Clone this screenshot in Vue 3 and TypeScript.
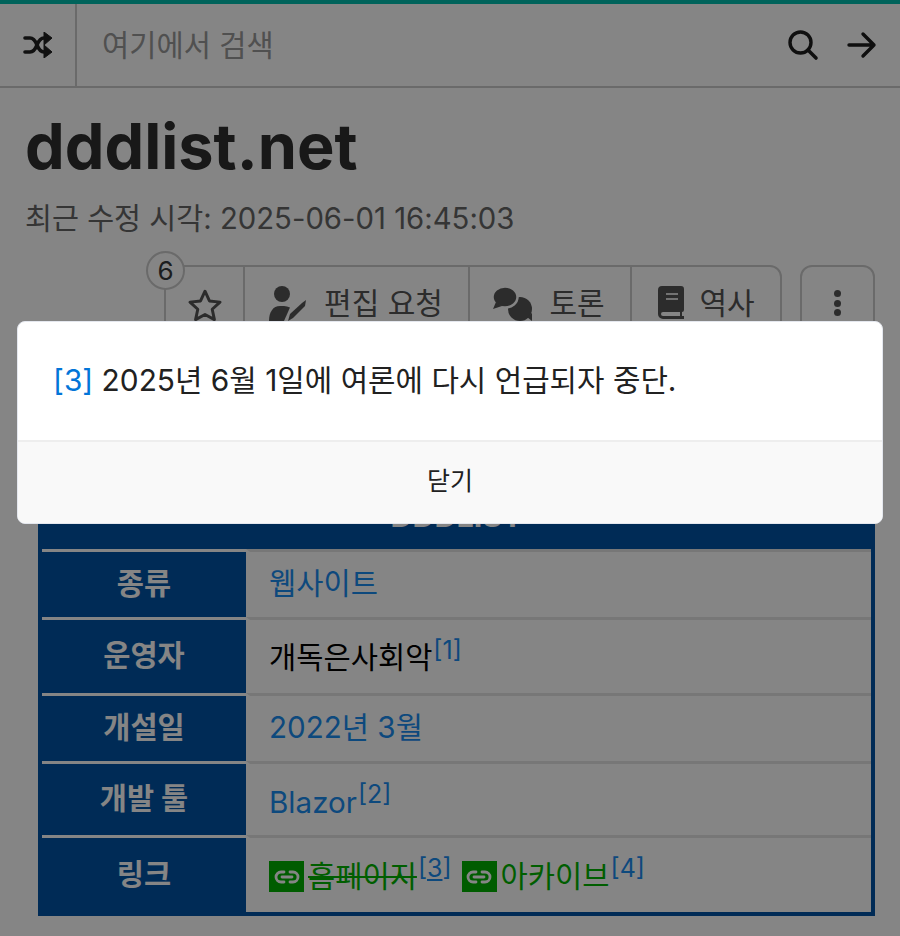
<script setup lang="ts">
interface Row {
  label: string
  height: number
}

const rows: Row[] = [
  { label: '종류', height: 68 },
  { label: '운영자', height: 76 },
  { label: '개설일', height: 68 },
  { label: '개발 툴', height: 74 },
  { label: '링크', height: 77 },
]
</script>

<template>
  <div class="page">
    <div class="accent" />
    <header class="nav">
      <button class="nav-random" aria-label="random">
        <svg width="30" height="26" viewBox="0 0 30 26">
          <path d="M2 6h5c3 0 5 2 7 7s4 7 7 7h3M2 20h5c3 0 5-2 7-7s4-7 7-7h3" fill="none" stroke="#222" stroke-width="3.6" stroke-linecap="round" />
          <path d="M21 0l8 6-8 7zM21 13l8 7-8 6z" fill="#222" stroke="#222" stroke-linejoin="round" />
        </svg>
      </button>
      <span class="nav-search">여기에서 검색</span>
      <svg class="nav-icon" width="32" height="32" viewBox="0 0 32 32">
        <circle cx="13.5" cy="13.5" r="10.5" fill="none" stroke="#1d1d1d" stroke-width="3.4" />
        <path d="M21 21l8 8" stroke="#1d1d1d" stroke-width="3.6" stroke-linecap="round" />
      </svg>
      <svg class="nav-icon nav-arrow" width="30" height="28" viewBox="0 0 30 28">
        <path d="M2 14h25M16 3l11 11-11 11" fill="none" stroke="#1d1d1d" stroke-width="3.4" stroke-linecap="round" stroke-linejoin="round" />
      </svg>
    </header>

    <main class="content">
      <h1 class="title">dddlist.net</h1>
      <p class="modified">최근 수정 시각: 2025-06-01 16:45:03</p>

      <div class="actions">
        <div class="tabs">
          <span class="star-count">6</span>
          <div class="tab tab-star">
            <svg width="36" height="34" viewBox="0 0 34 32">
              <path d="M17 3l4.2 9.2 10 1.1-7.4 6.7 2.1 9.8L17 25l-8.9 4.8 2.1-9.8-7.4-6.7 10-1.1z" fill="none" stroke="#555" stroke-width="2.8" stroke-linejoin="round" />
            </svg>
          </div>
          <div class="tab tab-edit">
            <svg width="40" height="36" viewBox="0 0 40 36">
              <circle cx="14" cy="9" r="8" fill="#555" />
              <path d="M1 36c0-9 4-15 11-15h4c2 0 4 .5 6 1.5L16 36z" fill="#555" />
              <path d="M20 36l2-7 12-11 4-3-1 6-12 12z" fill="#555" />
            </svg>
            <span>편집 요청</span>
          </div>
          <div class="tab tab-talk">
            <svg width="40" height="36" viewBox="0 0 40 36">
              <circle cx="27" cy="24" r="12" fill="#555" />
              <path d="M39 36l-5-4 5-4z" fill="#555" />
              <ellipse cx="12" cy="12" rx="12.5" ry="10.5" fill="#555" stroke="#fff" stroke-width="2.5" />
              <path d="M0 24l3-7 6 4z" fill="#555" />
            </svg>
            <span>토론</span>
          </div>
          <div class="tab tab-history">
            <svg width="28" height="34" viewBox="0 0 28 34">
              <path d="M5 1h19a3 3 0 0 1 3 3v21a2 2 0 0 1-2 2v4h2v3H6a5 5 0 0 1-5-5V5a4 4 0 0 1 4-4z" fill="#555" />
              <path d="M9 9h12M9 14h12" stroke="#ddd" stroke-width="2" />
              <path d="M6 27h17v4H6a2 2 0 0 1 0-4z" fill="#fff" />
            </svg>
            <span>역사</span>
          </div>
        </div>
        <div class="more">
          <i /><i /><i />
        </div>
      </div>

      <section class="infobox">
        <div class="infobox-head">DDDLIST</div>
        <div v-for="(row, i) in rows" :key="row.label" class="row" :style="{ height: row.height + 'px' }">
          <div class="row-label">{{ row.label }}</div>
          <div class="row-value">
            <a v-if="i === 0" class="link">웹사이트</a>
            <template v-else-if="i === 1"><span class="owner">개독은사회악</span><sup class="link">[1]</sup></template>
            <a v-else-if="i === 2" class="link">2022년 3월</a>
            <template v-else-if="i === 3"><a class="link blazor">Blazor</a><sup class="link">[2]</sup></template>
            <template v-else>
              <span class="ext-icon">
                <svg width="26" height="14" viewBox="0 0 26 14">
                  <path d="M10 2H7a5 5 0 0 0 0 10h3M16 2h3a5 5 0 0 1 0 10h-3M8 7h10" fill="none" stroke="#fff" stroke-width="2.8" stroke-linecap="round" />
                </svg>
              </span>
              <a class="ext ext-dead">홈페이지</a><sup class="link">[<u>3</u>]</sup>
              <span class="ext-icon ext-second">
                <svg width="26" height="14" viewBox="0 0 26 14">
                  <path d="M10 2H7a5 5 0 0 0 0 10h3M16 2h3a5 5 0 0 1 0 10h-3M8 7h10" fill="none" stroke="#fff" stroke-width="2.8" stroke-linecap="round" />
                </svg>
              </span>
              <a class="ext">아카이브</a><sup class="link">[4]</sup>
            </template>
          </div>
        </div>
      </section>
    </main>

    <div class="backdrop" />

    <div class="modal">
      <div class="modal-body"><a class="modal-ref">[3]</a> 2025년 6월 1일에 여론에 다시 언급되자 중단.</div>
      <div class="modal-foot">닫기</div>
    </div>
  </div>
</template>

<style>
html, body {
  margin: 0;
  background: #fff;
}
</style>

<style scoped>
.page {
  position: relative;
  width: 900px;
  height: 936px;
  overflow: hidden;
  background: #fff;
  color: #373a3c;
  font-family: Inter, "Noto Sans CJK KR", sans-serif;
}

.accent {
  height: 4px;
  background: #00bfae;
}

.nav {
  display: flex;
  align-items: center;
  height: 82px;
  border-bottom: 2px solid #ccc;
}
.nav-random {
  display: flex;
  align-items: center;
  justify-content: center;
  width: 77px;
  height: 100%;
  padding: 0;
  background: none;
  border: 0;
  border-right: 2px solid #ccc;
}
.nav-search {
  flex: 1;
  padding-left: 25px;
  padding-bottom: 4px;
  font-size: 29.6px;
  color: #999;
}
.nav-icon {
  margin-right: 28px;
}
.nav-arrow {
  margin-right: 23px;
}

.content {
  padding: 0 25px;
}
.title {
  margin: 20px 0 0;
  font-size: 63px;
  line-height: 76px;
  font-weight: 700;
  color: #2e2e2e;
}
.modified {
  margin: 17px 0 0;
  font-size: 29.3px;
  line-height: 36px;
  color: #666;
}

.actions {
  display: flex;
  justify-content: flex-end;
  gap: 18px;
  margin: 28px 0 0;
}
.tabs {
  position: relative;
  display: flex;
  height: 90px;
  border: 2px solid #ccc;
  border-radius: 12px 12px 0 0;
}
.star-count {
  position: absolute;
  left: -20px;
  top: -16px;
  z-index: 1;
  width: 35px;
  height: 35px;
  border: 2px solid #ccc;
  border-radius: 50%;
  background: #fff;
  font-size: 26px;
  line-height: 35px;
  text-align: center;
}
.tab {
  display: flex;
  align-items: flex-start;
  justify-content: center;
  gap: 14px;
  box-sizing: border-box;
  padding-top: 18px;
  font-size: 30px;
  line-height: 36px;
  color: #555;
  border-left: 2px solid #ccc;
}
.tab:first-of-type {
  border-left: 0;
}
.tab-star {
  width: 77px;
  padding-top: 21px;
}
.tab-edit,
.tab-talk {
  gap: 16px;
  padding-right: 2px;
}
.tab-edit { width: 225px; }
.tab-talk { width: 162px; }
.tab-history { width: 150px; }

.more {
  display: flex;
  flex-direction: column;
  align-items: center;
  gap: 2.5px;
  box-sizing: border-box;
  width: 75px;
  height: 90px;
  padding-top: 23px;
  border: 2px solid #ccc;
  border-radius: 12px 12px 0 0;
}
.more i {
  width: 7px;
  height: 7px;
  border-radius: 50%;
  background: #555;
}

.infobox {
  display: flex;
  flex-direction: column;
  box-sizing: border-box;
  width: 837px;
  height: 417px;
  margin: 140px 0 0 13px;
  padding: 0 4px 4px;
  background: #0053a6;
}
.infobox-head {
  flex: none;
  height: 50px;
  line-height: 34px;
  text-align: center;
  font-size: 30.5px;
  font-weight: 700;
  color: #fff;
}
.row {
  display: flex;
  flex: none;
}
.row-label {
  display: flex;
  flex: none;
  align-items: center;
  justify-content: center;
  box-sizing: border-box;
  width: 204px;
  border-top: 3px solid #fff;
  padding-bottom: 7px;
  color: #fff;
  font-size: 29.5px;
  font-weight: 700;
}
.row-value {
  flex: 1;
  display: flex;
  align-items: center;
  box-sizing: border-box;
  padding-left: 19px;
  padding-bottom: 6px;
  background: #fff;
  border-top: 3px solid #e5e5e5;
  border-left: 4px solid #fff;
  color: #000;
  font-size: 29.6px;
  white-space: pre;
}
.row-value sup {
  align-self: flex-start;
  margin-top: 18px;
  margin-left: 1px;
  font-size: 25px;
  line-height: 1;
}
.owner {
  margin-top: 3px;
}
.blazor {
  margin-top: 10px;
}
.link {
  color: #1a8cf0;
}
.ext {
  margin-top: 4px;
  color: #00b400;
}
.ext-dead {
  text-decoration: line-through;
}
.ext-icon {
  display: inline-flex;
  flex: none;
  align-items: center;
  justify-content: center;
  width: 35px;
  height: 31px;
  margin: 9px 4px 0 0;
  background: #00b000;
}
.ext-second {
  margin-left: 10px;
}

.backdrop {
  position: absolute;
  inset: 0;
  z-index: 2;
  background: rgba(0, 0, 0, 0.48);
}

.modal {
  position: absolute;
  left: 17px;
  top: 321px;
  z-index: 3;
  box-sizing: border-box;
  width: 866px;
  height: 203px;
  border-radius: 8px;
  border: 1px solid #e4e7ee;
  overflow: hidden;
  background: #fff;
  color: #212121;
}
.modal-body {
  height: 120px;
  box-sizing: border-box;
  padding: 38px 35px 0;
  font-size: 29.85px;
  line-height: 40px;
  border-bottom: 2px solid #eee;
}
.modal-ref {
  color: #0275d8;
}
.modal-foot {
  height: 81px;
  line-height: 79px;
  text-align: center;
  font-size: 25px;
  background: #f9f9f9;
}
</style>
